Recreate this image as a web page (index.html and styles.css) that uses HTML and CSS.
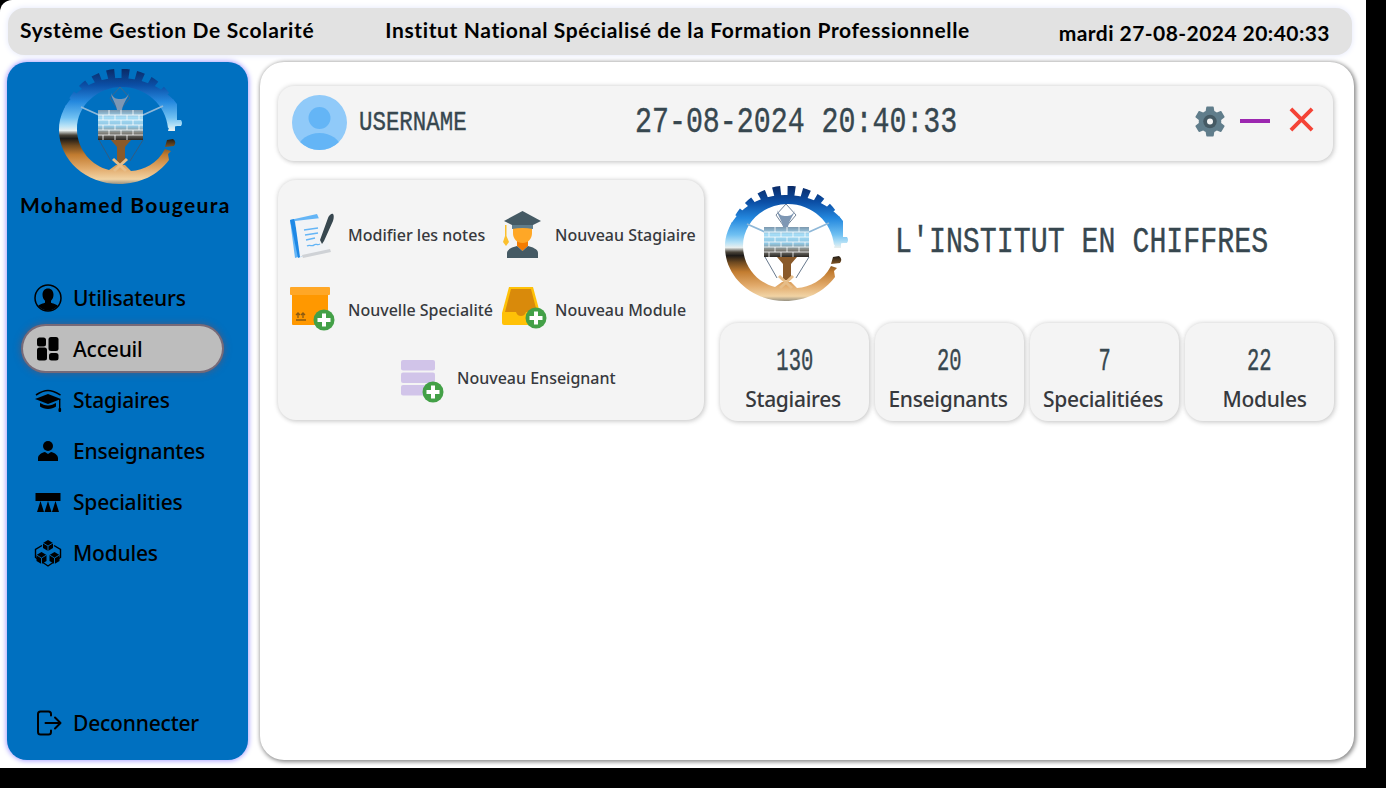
FILE: index.html
```html
<!DOCTYPE html>
<html lang="fr">
<head>
<meta charset="utf-8">
<title>Système Gestion De Scolarité</title>
<link rel="stylesheet" href="styles.css">
</head>
<body>
<svg class="defs" width="0" height="0" aria-hidden="true">
  <defs>
    <linearGradient id="metal" gradientUnits="userSpaceOnUse" x1="0" y1="0" x2="0" y2="116">
      <stop offset="0" stop-color="#0a2a66"/>
      <stop offset=".14" stop-color="#0b4fa6"/>
      <stop offset=".28" stop-color="#2488de"/>
      <stop offset=".42" stop-color="#6fc0f2"/>
      <stop offset=".49" stop-color="#b8e2f6"/>
      <stop offset=".53" stop-color="#e8efef"/>
      <stop offset=".57" stop-color="#4a443a"/>
      <stop offset=".6" stop-color="#1d1a17"/>
      <stop offset=".66" stop-color="#6f4a20"/>
      <stop offset=".74" stop-color="#c27c30"/>
      <stop offset=".86" stop-color="#e2ab6c"/>
      <stop offset=".95" stop-color="#f1d3a4"/>
      <stop offset="1" stop-color="#85857c"/>
    </linearGradient>
    <linearGradient id="bricks" x1="0" y1="0" x2="0" y2="1">
      <stop offset="0" stop-color="#7d98ae"/>
      <stop offset=".25" stop-color="#a4dcf6"/>
      <stop offset=".55" stop-color="#8fc6e2"/>
      <stop offset=".75" stop-color="#8a8a84"/>
      <stop offset="1" stop-color="#2a2723"/>
    </linearGradient>
    <symbol id="logo" viewBox="0 0 124 116">
      <path fill="url(#metal)" fill-rule="evenodd" d="M60 9C27 9 0 32 0 61c0 30 27 54 60 54 21 0 39-9 50-24l-1-6 3-3-6-2C98 95 85 101 72 102L66 96 57 96 50 101C33 97 18 81 18 60 18 37 38 18 63 18c24 0 44 18 46 41l9-2V35C106 19 84 9 60 9Z"/>
      <path fill="none" stroke="url(#metal)" stroke-width="10" stroke-dasharray="7.500 6.900" d="M9 45A55 55 0 0 1 115 45"/>
      <path fill="url(#metal)" d="M112 51h10q2 3 0 6h-6v5h-7zM108 71l6-1q4 3 1 7l-9 1z"/>
      <path fill="none" stroke="#8fb8d8" stroke-width="1.800" d="M22 38l18 8M104 37l-20 9"/>
      <path fill="none" stroke="#50657e" stroke-width=".8" d="M61 18l-10 11 9 13 11-13z"/>
      <path fill="#7e97b4" d="M52 24c1 7 5 10 6 17h5c1-7 5-10 7-17-2 5-5 6-9 6s-7-1-9-6z"/>
      <rect x="39" y="41" width="45" height="30" fill="url(#bricks)"/>
      <path fill="none" stroke="#fff" stroke-width=".8" d="M39 46h45M39 51h45M39 56h45M39 61h45M39 66h45M50 41v5M62 41v5M74 41v5M44 46v5M56 46v5M68 46v5M80 46v5M50 51v5M62 51v5M74 51v5M44 56v5M56 56v5M68 56v5M80 56v5M50 61v5M62 61v5M74 61v5M44 66v5M56 66v5M68 66v5"/>
      <path fill="#8a5a2a" d="M52 71h20l-6 7v16h-8V78z"/>
      <path fill="none" stroke="#40566e" stroke-width=".8" d="M40 71l12 21M84 71L71 92"/>
      <path fill="none" stroke="#e6bd88" stroke-width="3" d="M54 90l13 12M68 90l-13 12"/>
    </symbol>
    <symbol id="plus" viewBox="0 0 22 22">
      <circle cx="11" cy="11" r="10.500" fill="#43a047"/>
      <path fill="none" stroke="#fff" stroke-width="4" d="M11 4.500v13M4.500 11h13"/>
    </symbol>
  </defs>
</svg>
<div class="app">
  <header class="topbar">
    <span class="topbar-title">Système Gestion De Scolarité</span>
    <span class="topbar-center">Institut National Spécialisé de la Formation Professionnelle</span>
    <span class="topbar-date">mardi 27-08-2024 20:40:33</span>
  </header>
  <div class="workspace">
    <aside class="sidebar">
      <svg class="side-logo"><use href="#logo"/></svg>
      <div class="side-name">Mohamed Bougeura</div>
      <nav class="nav">
        <a class="nav-item">
          <svg class="nav-icon" viewBox="0 0 28 28"><defs><clipPath id="uc"><circle cx="14" cy="14" r="12.500"/></clipPath></defs><circle cx="14" cy="14" r="13" fill="none" stroke="#000" stroke-width="1.500"/><path clip-path="url(#uc)" d="M14 4.500c3.500 0 5.500 2.600 5.500 6.200 0 2.600-1 4.600-2.500 6v2c3 1 7 2 8 5v6H3v-6c1-3 5-4 8-5v-2c-1.500-1.400-2.500-3.400-2.500-6 0-3.600 2-6.200 5.500-6.200z"/></svg>
          <span>Utilisateurs</span>
        </a>
        <a class="nav-item nav-item-active">
          <svg class="nav-icon" viewBox="0 0 28 28"><rect x="3" y="2.500" width="9" height="9" rx="2.500"/><rect x="14.500" y="2" width="10" height="14" rx="2.500"/><rect x="3" y="12.500" width="10" height="13" rx="2.500"/><rect x="15" y="18" width="9.500" height="7.500" rx="2.500"/></svg>
          <span>Acceuil</span>
        </a>
        <a class="nav-item">
          <svg class="nav-icon" viewBox="0 0 28 28"><path fill="none" stroke="#000" stroke-width="1.600" d="M2 9c3-2 7-4.500 12-4.500S23 7 26.500 9"/><path d="M14 8l13 5-13 5-13-5z"/><path d="M6 17c2 1 5 2.500 8 2.500s6-1.500 8-2.500v3.500c-2 1.500-5 2.500-8 2.500s-6-1-8-2.500z"/><rect x="25" y="13" width="1.400" height="10"/><rect x="24.500" y="22" width="2.600" height="4" rx="1"/></svg>
          <span>Stagiaires</span>
        </a>
        <a class="nav-item">
          <svg class="nav-icon" viewBox="0 0 28 28"><circle cx="14" cy="9" r="5"/><path d="M4 24v-3c0-3 4-5.500 7-6l3 2 3-2c3 .5 7 3 7 6v3z"/></svg>
          <span>Enseignantes</span>
        </a>
        <a class="nav-item">
          <svg class="nav-icon" viewBox="0 0 28 28"><rect x="1.500" y="5" width="25" height="8"/><path d="M6.500 13l3.500 11H3zM14 13l3.500 11h-7zM21.500 13l3.500 11h-7z"/></svg>
          <span>Specialities</span>
        </a>
        <a class="nav-item">
          <svg class="nav-icon" viewBox="0 0 28 28"><path fill="none" stroke="#000" stroke-width="1.400" d="M8 6.500L1.500 10.500v8L14 27l12.500-8.500v-8L20 6.500"/><path d="M14 1l5 3v5l-5 3-5-3V4z"/><path d="M7.500 13l5 3v6l-5 3-5-3v-6zM20.500 13l5 3v6l-5 3-5-3v-6z"/><path fill="none" stroke="#0070c0" stroke-width=".9" d="M9 4l5 3 5-3M14 7v5M2.500 16l5 3 5-3M7.500 19v6M15.500 16l5 3 5-3M20.500 19v6"/></svg>
          <span>Modules</span>
        </a>
      </nav>
      <a class="nav-item nav-item-bottom">
        <svg class="nav-icon" viewBox="0 0 28 28"><path fill="none" stroke="#000" stroke-width="2" stroke-linecap="round" stroke-linejoin="round" d="M17 6.500V5a2.500 2.500 0 0 0-2.500-2.500H6.500A2.500 2.500 0 0 0 4 5v18a2.500 2.500 0 0 0 2.500 2.500h8A2.500 2.500 0 0 0 17 23v-1.500M11.500 14h14.500M21 8.500l5.500 5.500-5.500 5.500"/></svg>
        <span>Deconnecter</span>
      </a>
    </aside>
    <main class="main">
      <section class="head-card">
        <svg class="avatar" viewBox="0 0 55 55"><defs><clipPath id="av"><circle cx="27.500" cy="27.500" r="27.500"/></clipPath></defs><circle cx="27.500" cy="27.500" r="27.500" fill="#90caf9"/><g clip-path="url(#av)" fill="#64b5f6"><circle cx="27.500" cy="23" r="11"/><ellipse cx="27.500" cy="53" rx="21" ry="15"/></g></svg>
        <div class="username"><span class="lcd lcd-user">USERNAME</span></div>
        <div class="clock"><span class="lcd lcd-big">27-08-2024 20:40:33</span></div>
        <div class="head-actions">
          <svg class="act-gear" viewBox="2 2 20 20"><path fill="#607d8b" d="M19.430 12.980c.04-.32.07-.64.07-.98s-.03-.66-.07-.98l2.110-1.650c.19-.15.24-.42.12-.64l-2-3.460c-.12-.22-.39-.3-.61-.22l-2.490 1c-.52-.4-1.080-.73-1.690-.98l-.38-2.650C14.460 2.180 14.250 2 14 2h-4c-.25 0-.46.18-.49.42l-.38 2.650c-.61.25-1.170.59-1.690.98l-2.490-1c-.23-.09-.49 0-.61.22l-2 3.460c-.13.22-.07.49.12.64l2.110 1.650c-.04.32-.07.65-.07.98s.03.66.07.98l-2.110 1.650c-.19.15-.24.42-.12.64l2 3.460c.12.22.39.3.61.22l2.490-1c.52.4 1.080.73 1.690.98l.38 2.650c.03.24.24.42.49.42h4c.25 0 .46-.18.49-.42l.38-2.650c.61-.25 1.170-.59 1.690-.98l2.490 1c.23.09.49 0 .61-.22l2-3.460c.12-.22.07-.49-.12-.64l-2.110-1.650z"/><circle cx="12" cy="12" r="4.500" fill="#455a64"/><circle cx="12" cy="12" r="2" fill="#f4f4f4"/></svg>
          <span class="act-minus"></span>
          <svg class="act-close" viewBox="0 0 26 26"><path fill="none" stroke="#f44336" stroke-width="4" d="M2 2l22 22M24 2L2 24"/></svg>
        </div>
      </section>
      <div class="content">
        <section class="shortcuts">
          <a class="shortcut">
            <svg class="sc-icon" viewBox="0 0 48 48"><path fill="#64b5f6" d="M1 9l27-6 3 7L9 46l-3 1z"/><path fill="#1e88e5" d="M1 9l4-1 9 37-5 2z"/><path fill="#f1f3f6" d="M7 9l26-3 9 33-30 6z" transform="translate(-1 1)"/><path fill="#cfd2d6" d="M13 44l28-6 1 3-28 6z"/><path fill="none" stroke="#64b5f6" stroke-width="1.300" d="M15 19l14-2M16 24l13-2M17 29l9-2M18 35c3-2 5 1 7-1s3 1 6-1"/><path fill="#37474f" d="M31 29L39 7c1-3 4-5 5-4s1 4 0 7l-9 20-2 3z"/></svg>
            <span>Modifier les notes</span>
          </a>
          <a class="shortcut shortcut-b">
            <svg class="sc-icon sc-narrow" viewBox="0 0 43 48"><path fill="#fbc02d" d="M4 14h1.500v11L8 31l-3 4-3-4 2-6z"/><path fill="#f57c00" d="M16 30h11v5l-5.500 5-5.500-5z"/><path fill="#455a64" d="M6 47v-5c0-4 6-6 10-7l5.500 5 5.500-5c4 1 10 3 10 7v5z"/><path fill="#ffa726" d="M12 17h19v5c0 6-4 10-9.500 10S12 28 12 22z"/><path fill="#607d8b" d="M11 9h21v9c-7-1.500-14-1.500-21 0z"/><path fill="#455a64" d="M21.500 0L40 10l-8 4H11l-8-4z"/></svg>
            <span>Nouveau Stagiaire</span>
          </a>
          <a class="shortcut">
            <span class="sc-wrap">
              <svg class="sc-icon" viewBox="0 0 48 48"><rect x="3" y="8" width="36" height="31" rx="1" fill="#ff9800"/><rect x="1" y="1" width="40" height="8" rx="1" fill="#ffa726"/><path fill="none" stroke="#8a5a12" stroke-width="1.300" d="M9 32v-5M14 32v-5M7 29l2-2 2 2M12 29l2-2 2 2M7 34h10"/></svg>
              <svg class="sc-plus"><use href="#plus"/></svg>
            </span>
            <span>Nouvelle Specialité</span>
          </a>
          <a class="shortcut shortcut-b">
            <span class="sc-wrap sc-narrow sc-tray">
              <svg class="sc-icon sc-narrow" viewBox="0 0 43 48"><path fill="#ffc107" d="M7 1h24l7 26v10a2 2 0 0 1-2 2H2a2 2 0 0 1-2-2V27z"/><path fill="#d98a0b" d="M9 3h20l6 23H24c-1 3-3 4-5 4s-4-1-5-4H3z"/></svg>
              <svg class="sc-plus sc-plus-b"><use href="#plus"/></svg>
            </span>
            <span>Nouveau Module</span>
          </a>
          <a class="shortcut shortcut-wide">
            <span class="sc-wrap sc-stack">
              <svg class="sc-stack-icon" viewBox="0 0 34 36"><rect width="34" height="10.500" rx="2" fill="#d1c4e9"/><rect y="12.500" width="34" height="10.500" rx="2" fill="#d1c4e9"/><rect y="25" width="34" height="10.500" rx="2" fill="#d1c4e9"/></svg>
              <svg class="sc-plus sc-plus-c"><use href="#plus"/></svg>
            </span>
            <span>Nouveau Enseignant</span>
          </a>
        </section>
        <section class="figures">
          <div class="figures-head">
            <svg class="fig-logo"><use href="#logo"/></svg>
            <div class="fig-title"><span class="lcd lcd-big">L'INSTITUT EN CHIFFRES</span></div>
          </div>
          <div class="stats">
            <div class="stat"><span class="stat-num"><span class="lcd lcd-stat">130</span></span><span class="stat-label">Stagiaires</span></div>
            <div class="stat"><span class="stat-num"><span class="lcd lcd-stat">20</span></span><span class="stat-label">Enseignants</span></div>
            <div class="stat"><span class="stat-num"><span class="lcd lcd-stat">7</span></span><span class="stat-label">Specialitiées</span></div>
            <div class="stat"><span class="stat-num"><span class="lcd lcd-stat">22</span></span><span class="stat-label stat-label-shift">Modules</span></div>
          </div>
        </section>
      </div>
    </main>
  </div>
</div>
</body>
</html>
```
FILE: styles.css
```css
* { box-sizing: border-box; }
html, body { margin: 0; padding: 0; height: 788px; background: #000; overflow: hidden; }
.defs { display: block; height: 0; width: 0; }
.app {
  width: 1366px; height: 768px; background: #fff; border-top-left-radius: 12px;
  padding: 8px 12px 8px 7px; display: flex; flex-direction: column; gap: 7px;
  font-family: "Noto Sans", "Open Sans", sans-serif; color: #000;
}
.topbar {
  height: 47px; margin: 0 2px 0 1px; padding: 0 22px 0 12px; background: #e2e2e2; border-radius: 16px;
  box-shadow: 0 0 6px #e2e6fb; display: flex; align-items: center; gap: 71px;
  font-family: Lato, "Noto Sans", sans-serif; font-weight: 700; font-size: 21px; white-space: nowrap; flex: none;
}
.topbar-title { letter-spacing: .68px; margin-top: -4px; }
.topbar-center { letter-spacing: .62px; margin-top: -4px; }
.topbar-date { margin-left: auto; margin-top: 1px; letter-spacing: .44px; }
.workspace { flex: 1; display: flex; gap: 12px; min-height: 0; }
.sidebar {
  width: 241px; flex: none; background: #0070c0; border-radius: 20px; box-shadow: 0 0 5px 1px #a9a2ff;
  display: flex; flex-direction: column; padding: 7px 0 15px;
}
.side-logo { width: 124px; height: 116px; margin-left: 52px; flex: none; }
.side-name {
  font-family: Lato, "Noto Sans", sans-serif; font-weight: 700; font-size: 21px; letter-spacing: 1.3px;
  margin: 7px 0 0 13px; line-height: 26px; white-space: nowrap;
}
.nav { margin-top: 57px; display: flex; flex-direction: column; gap: 6px; }
.nav-item {
  display: flex; align-items: center; gap: 11px; width: 199px; height: 45px; margin-left: 16px; padding-left: 11px;
  font-size: 21px; font-weight: 500; border-radius: 23px; white-space: nowrap; letter-spacing: -.2px;
}
.nav-item-active { background: #bdbdbd; box-shadow: 0 0 0 2px #776a78, 0 0 6px 3px rgba(120,80,90,.5); }
.nav-item-bottom { margin-top: auto; }
.nav-icon { width: 28px; height: 28px; flex: none; display: block; }
.main {
  width: 1094px; flex: none; background: #fff; border-radius: 24px; padding: 24px 21px 0 18px;
  box-shadow: 1px 1px 4px 1px #888;
}
.head-card {
  height: 75px; background: #f4f4f4; border-radius: 16px; display: flex; align-items: center; padding: 0 19px 0 14px;
  box-shadow: 0 0 5px rgba(0,0,0,.18), 2px 2px 5px rgba(0,0,0,.1);
}
.avatar { width: 55px; height: 55px; flex: none; margin-top: -2px; }
.username { width: 276px; margin-left: 12px; flex: none; margin-top: -2px; }
.clock { width: 322px; flex: none; margin-top: -2px; }
.lcd { display: inline-block; font-family: "Liberation Mono", monospace; white-space: nowrap; color: #37474f; -webkit-text-stroke: .4px #37474f; }
.lcd-user { font-size: 27px; line-height: 30px; transform: scaleX(.83); transform-origin: left center; }
.lcd-big { font-size: 36px; line-height: 40px; transform: scaleX(.785); transform-origin: left center; }
.lcd-stat { font-size: 32px; line-height: 36px; transform: scaleX(.64); }
.head-actions { margin-left: auto; display: flex; align-items: center; gap: 14px; }
.act-gear { width: 30px; height: 31px; display: block; margin-top: -5px; margin-right: 1px; }
.act-minus { width: 30px; height: 4px; background: #9c27b0; margin-right: 5px; margin-top: -6px; }
.act-close { width: 25px; height: 25px; display: block; margin-top: -8px; }
.content { display: flex; gap: 16px; margin-top: 19px; }
.shortcuts {
  width: 426px; height: 240px; background: #f4f4f4; border-radius: 18px; flex: none;
  box-shadow: 0 0 5px rgba(0,0,0,.18), 2px 2px 5px rgba(0,0,0,.1);
  display: grid; grid-template-columns: 213px 1fr; grid-template-rows: 75px 75px 61px; padding: 17px 0 0 11px;
  color: #37393d; font-size: 16px; font-weight: 500; white-space: nowrap;
}
.shortcut { display: flex; align-items: center; gap: 11px; }
.shortcut-b { margin-left: -1px; }
.shortcut-wide { grid-column: 1 / span 2; padding-left: 111px; gap: 13px; }
.sc-icon { width: 48px; height: 48px; display: block; flex: none; margin-top: 1px; }
.sc-narrow { width: 43px; }
.sc-wrap { position: relative; width: 48px; height: 48px; display: block; flex: none; margin-top: 1px; }
.sc-wrap .sc-icon { margin-top: 0; }
.sc-wrap.sc-narrow { width: 43px; }
.sc-tray { margin-left: 1px; margin-right: -1px; }
.sc-plus { position: absolute; width: 22px; height: 22px; right: 2px; bottom: 3px; }
.sc-plus-b { right: -2px; bottom: 5px; }
.sc-stack { width: 44px; height: 44px; }
.sc-stack-icon { width: 34px; height: 36px; display: block; margin: 4px 0 0 1px; }
.sc-plus-c { right: 0; bottom: -3px; }
.figures { width: 614px; flex: none; }
.figures-head { height: 143px; display: flex; align-items: flex-start; padding: 6px 0 0 5px; }
.fig-logo { width: 124px; height: 116px; flex: none; }
.fig-title { margin: 37px 0 0 46px; }
.stats { display: grid; grid-template-columns: repeat(4, 149px); gap: 6px; }
.stat {
  height: 98px; background: #f4f4f4; border-radius: 18px; display: flex; flex-direction: column; align-items: center;
  box-shadow: 0 0 5px rgba(0,0,0,.18), 2px 2px 5px rgba(0,0,0,.1); padding-top: 21px;
}
.stat-num { height: 36px; display: block; }
.stat-label { color: #37393d; font-size: 21px; font-weight: 500; margin: 5px 3px 0 0; letter-spacing: -.3px; white-space: nowrap; }
.stat-label-shift { margin-left: 10px; margin-right: 0; }
```
